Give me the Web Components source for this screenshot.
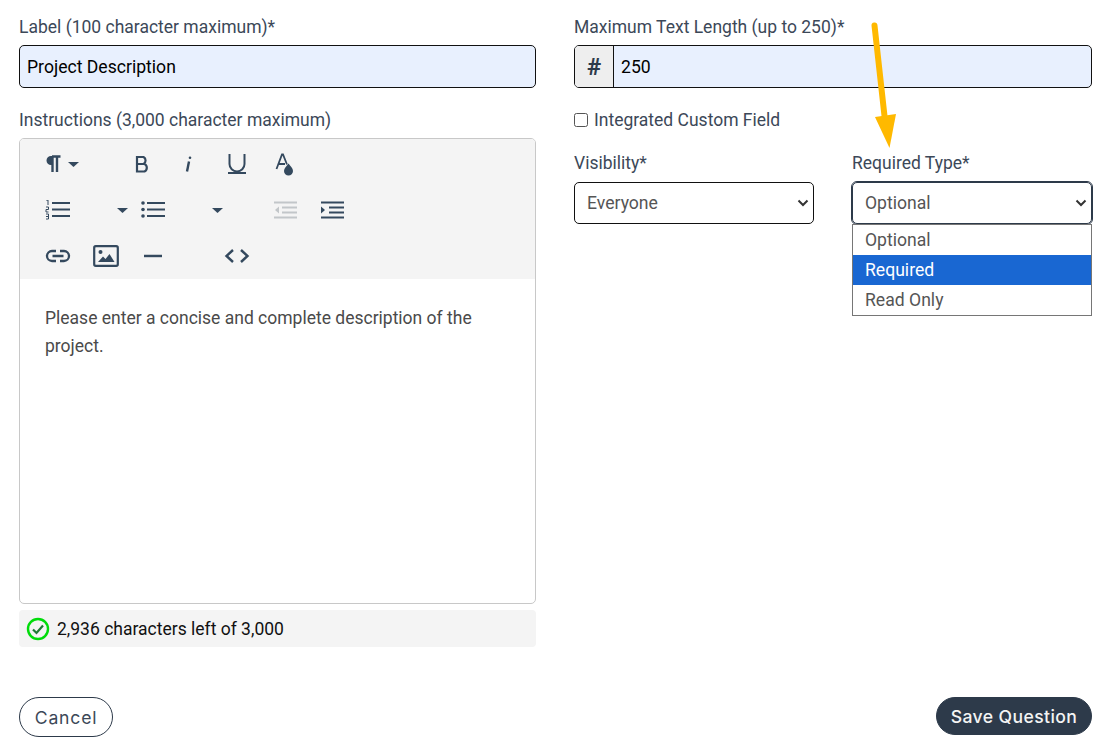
<!DOCTYPE html>
<html>
<head>
<meta charset="utf-8">
<style>
  html, body { margin: 0; background: #fff; }
  body { font-family: Roboto, sans-serif; color: #2d3a4a; }
</style>
</head>
<body>
<question-form>
  <div slot="left">
    <form-field label="Label (100 character maximum)*"><text-box value="Project Description"></text-box></form-field>
    <form-field label="Instructions (3,000 character maximum)">
      <rich-editor>Please enter a concise and complete description of the project.</rich-editor>
      <char-counter>2,936 characters left of 3,000</char-counter>
    </form-field>
  </div>
  <div slot="right">
    <form-field label="Maximum Text Length (up to 250)*"><text-box value="250" prefix="#"></text-box></form-field>
    <check-row>Integrated Custom Field</check-row>
    <select-row>
      <form-field label="Visibility*"><select-box value="Everyone"></select-box></form-field>
      <form-field label="Required Type*"><select-box value="Optional" open options="Optional,Required,Read Only" selected="1"></select-box></form-field>
    </select-row>
  </div>
  <pill-button slot="cancel">Cancel</pill-button>
  <pill-button slot="save" primary>Save Question</pill-button>
</question-form>
<script>
class QuestionForm extends HTMLElement {
  connectedCallback() {
    this.attachShadow({ mode: 'open' }).innerHTML = `
      <style>
        :host { display: block; position: relative; width: 1104px; height: 747px; box-sizing: border-box; padding: 17px 12px 10px 19px; overflow: hidden; }
        .cols { display: grid; grid-template-columns: 517px 518px; column-gap: 38px; height: 630px; }
        .foot { display: flex; justify-content: space-between; align-items: flex-start; margin-top: 50px; }
        svg { position: absolute; left: 860px; top: 15px; pointer-events: none; }
      </style>
      <div class="cols"><slot name="left"></slot><slot name="right"></slot></div>
      <div class="foot"><slot name="cancel"></slot><slot name="save"></slot></div>
      <svg width="45" height="140" viewBox="0 0 45 140">
        <path d="M14.500 10.500 L24.500 101" stroke="#ffb900" stroke-width="6" stroke-linecap="round" fill="none"/>
        <path d="M15 102 L36 99 L29.500 133 Z" fill="#ffb900"/>
      </svg>`;
  }
}
class FormField extends HTMLElement {
  connectedCallback() {
    this.attachShadow({ mode: 'open' }).innerHTML = `
      <style>
        :host { display: block; margin-bottom: 22px; }
        label { display: block; font-size: 17.5px; line-height: 21px; margin-bottom: var(--label-gap, 7px); color: #3c4858; }
      </style>
      <label>${this.getAttribute('label')}</label><slot></slot>`;
  }
}
class TextBox extends HTMLElement {
  connectedCallback() {
    const prefix = this.getAttribute('prefix');
    this.attachShadow({ mode: 'open' }).innerHTML = `
      <style>
        :host { display: flex; height: 43px; box-sizing: border-box; border: 1px solid #111; border-radius: 5px; overflow: hidden; background: #e8f0fe; }
        .pre { width: 38px; flex: none; display: flex; align-items: center; justify-content: center; background: #eee; border-right: 1px solid #111; font-size: 24px; font-weight: 700; color: #2d3a4a; }
        .val { flex: 1; display: flex; align-items: center; padding-left: 7px; font-size: 17.6px; color: #000; }
      </style>
      ${prefix ? `<div class="pre">${prefix}</div>` : ''}<div class="val">${this.getAttribute('value')}</div>`;
  }
}
class RichEditor extends HTMLElement {
  connectedCallback() {
    const c = '#34495e';
    const caret = `<svg class="caret" width="11" height="5" viewBox="0 0 11 5"><path d="M0 0H11L5.500 5Z" fill="${c}"/></svg>`;
    this.attachShadow({ mode: 'open' }).innerHTML = `
      <style>
        :host { display: block; height: 466px; box-sizing: border-box; border: 1px solid #c8c8c8; border-radius: 5px; overflow: hidden; font-size: 17.5px; color: #4a4a4a; }
        .bar { height: 140px; background: #f4f4f4; display: flex; flex-direction: column; }
        .row { height: 46px; display: flex; align-items: center; padding-left: 25px; }
        .row:first-child { margin-top: 2px; }
        .tool { flex: none; display: flex; align-items: center; }
        .body { padding: 25px; line-height: 28px; }
      </style>
      <div class="bar">
        <div class="row">
          <span class="tool" style="width:89px;gap:6px">
            <svg width="17" height="20" viewBox="0 0 17 20"><path d="M7 2.500H15.500M7.500 2.500V18M12 2.500V18" stroke="${c}" stroke-width="2.400" fill="none"/><path d="M8 2H6A4.500 4.500 0 0 0 6 11H8Z" fill="${c}"/></svg>${caret}
          </span>
          <span class="tool" style="width:49px"><svg width="18" height="20" viewBox="0 0 18 20"><path d="M3 3H9.500A4 4 0 0 1 9.500 10H3ZM9.500 10H10.500A4.200 4.200 0 0 1 10.500 17.500H3V3" stroke="${c}" stroke-width="2.200" fill="none"/></svg></span>
          <span class="tool" style="width:44px"><svg width="12" height="20" viewBox="0 0 12 20"><path d="M6 7.500 L4 17.500" stroke="${c}" stroke-width="2.400" fill="none"/><circle cx="7" cy="3.800" r="1.300" fill="${c}"/></svg></span>
          <span class="tool" style="width:48px"><svg width="20" height="24" viewBox="0 0 20 24"><path d="M2.500 2V12A7.500 7.500 0 0 0 17.500 12V2" stroke="${c}" stroke-width="2" fill="none"/><path d="M1 21H19" stroke="${c}" stroke-width="2"/></svg></span>
          <span class="tool"><svg width="20" height="24" viewBox="0 0 20 24"><path d="M1.500 17L7 2.500H8L12 12.500M3.500 12H10" stroke="${c}" stroke-width="1.800" fill="none"/><path d="M13.500 11.500C15.500 14.500 18 16 18 19A4.500 4.500 0 0 1 9 19C9 16 11.500 14.500 13.500 11.500Z" fill="${c}"/></svg></span>
        </div>
        <div class="row">
          <span class="tool" style="width:72px"><svg width="26" height="20" viewBox="0 0 26 20"><path d="M7 3H25M7 9.500H25M7 16H25" stroke="${c}" stroke-width="2.200"/><path d="M1.500 .5L3 0V5M1 7H3.500V9.500H1V12H3.500M1 14H3.500V19H1M1 16.500H3.500" stroke="${c}" stroke-width="1" fill="none"/></svg></span>
          <span class="tool" style="width:24px">${caret}</span>
          <span class="tool" style="width:71px"><svg width="25" height="20" viewBox="0 0 25 20"><path d="M6 3H24M6 9.500H24M6 16H24" stroke="${c}" stroke-width="2.200"/><circle cx="2" cy="3" r="1.800" fill="${c}"/><circle cx="2" cy="9.500" r="1.800" fill="${c}"/><circle cx="2" cy="16" r="1.800" fill="${c}"/></svg></span>
          <span class="tool" style="width:62px">${caret}</span>
          <span class="tool" style="width:47px"><svg width="23" height="20" viewBox="0 0 23 20"><path d="M0 2.500H23M8 7.500H23M8 12.500H23M0 17.500H23" stroke="#c2c6c9" stroke-width="2.200"/><path d="M5 6.500V13.500L1 10Z" fill="#c2c6c9"/></svg></span>
          <span class="tool"><svg width="23" height="20" viewBox="0 0 23 20"><path d="M0 2.500H23M8 7.500H23M8 12.500H23M0 17.500H23" stroke="${c}" stroke-width="2.200"/><path d="M0 6.500V13.500L4 10Z" fill="${c}"/></svg></span>
        </div>
        <div class="row">
          <span class="tool" style="width:48px"><svg width="26" height="14" viewBox="0 0 26 14"><path d="M11 2H7A5 5 0 0 0 7 12H11M15 2H19A5 5 0 0 1 19 12H15M7.500 7H18.500" stroke="${c}" stroke-width="2.300" fill="none"/></svg></span>
          <span class="tool" style="width:51px"><svg width="26" height="22" viewBox="0 0 26 22"><rect x="1.200" y="1.200" width="23.600" height="19.600" rx="1.500" stroke="${c}" stroke-width="2.200" fill="none"/><circle cx="7.500" cy="7" r="2" fill="${c}"/><path d="M5 17L10 11.500L12.500 14L16.500 9L21.500 17Z" fill="${c}"/></svg></span>
          <span class="tool" style="width:80px"><svg width="18" height="4" viewBox="0 0 18 4"><path d="M0 2H18" stroke="${c}" stroke-width="2.400"/></svg></span>
          <span class="tool"><svg width="26" height="16" viewBox="0 0 26 16"><path d="M9 2L2.500 8L9 14M17 2L23.500 8L17 14" stroke="${c}" stroke-width="2.400" fill="none"/></svg></span>
        </div>
      </div>
      <div class="body"><slot></slot></div>`;
  }
}
class CharCounter extends HTMLElement {
  connectedCallback() {
    this.attachShadow({ mode: 'open' }).innerHTML = `
      <style>
        :host { display: flex; align-items: center; gap: 7px; height: 37px; margin-top: 6px; padding-left: 7px; background: #f4f4f4; border-radius: 4px; font-size: 17.5px; color: #111; }
      </style>
      <svg width="24" height="24" viewBox="0 0 24 24"><circle cx="12" cy="12" r="10" stroke="#00dc0a" stroke-width="2.400" fill="none"/><path d="M7 12.500L10.500 16L17 8.500" stroke="#1f7a35" stroke-width="2.200" fill="none"/></svg>
      <slot></slot>`;
  }
}
class CheckRow extends HTMLElement {
  connectedCallback() {
    this.attachShadow({ mode: 'open' }).innerHTML = `
      <style>
        :host { display: flex; align-items: center; gap: 6px; height: 21px; margin: -1px 0 23px; font-size: 17.5px; color: #3c4858; }
        i { width: 14px; height: 14px; box-sizing: border-box; border: 1px solid #555; border-radius: 2.500px; background: #fff; }
      </style>
      <i></i><slot></slot>`;
  }
}
class SelectRow extends HTMLElement {
  connectedCallback() {
    this.attachShadow({ mode: 'open' }).innerHTML = `
      <style>:host { display: grid; grid-template-columns: 240px 240px; column-gap: 38px; --label-gap: 8px; }</style><slot></slot>`;
  }
}
class SelectBox extends HTMLElement {
  connectedCallback() {
    const open = this.hasAttribute('open');
    const selected = Number(this.getAttribute('selected'));
    const options = (this.getAttribute('options') || '').split(',').filter(Boolean);
    this.attachShadow({ mode: 'open' }).innerHTML = `
      <style>
        :host { display: block; position: relative; font-size: 17.6px; }
        .box { height: 42px; box-sizing: border-box; display: flex; align-items: center; justify-content: space-between; padding: 0 4px 0 12px; border: 1px solid #111; border-radius: 5px; color: #555; background: #fff; }
        .box.open { border-color: #2d3a4a; outline: 1px solid #2d3a4a; }
        .list { position: absolute; left: 0; right: 0; top: 42px; box-sizing: border-box; background: #fff; border: 1px solid #767676; }
        .opt { height: 30px; display: flex; align-items: center; padding-left: 12px; color: #555; }
        .opt.on { background: #1967d2; color: #fff; }
      </style>
      <div class="box ${open ? 'open' : ''}">${this.getAttribute('value')}
        <svg width="12" height="8" viewBox="0 0 12 8"><path d="M1.500 1.500L6 6L10.500 1.500" stroke="#333" stroke-width="2" fill="none"/></svg>
      </div>
      ${open ? `<div class="list">${options.map((o, i) => `<div class="opt ${i === selected ? 'on' : ''}">${o}</div>`).join('')}</div>` : ''}`;
  }
}
class PillButton extends HTMLElement {
  connectedCallback() {
    this.attachShadow({ mode: 'open' }).innerHTML = `
      <style>
        :host { display: inline-flex; align-items: center; justify-content: center; box-sizing: border-box; border-radius: 20px; font-family: Inter, sans-serif; font-size: 17.6px; letter-spacing: .8px; border: 1px solid #2d3a4a; color: #3c4858; background: #fff; height: 40px; width: 94px; }
        :host([primary]) { background: #2d3a4a; color: #f4f4f4; width: 156px; height: 38px; font-weight: 500; letter-spacing: .4px; }
      </style>
      <slot></slot>`;
  }
}
customElements.define('question-form', QuestionForm);
customElements.define('form-field', FormField);
customElements.define('text-box', TextBox);
customElements.define('rich-editor', RichEditor);
customElements.define('char-counter', CharCounter);
customElements.define('check-row', CheckRow);
customElements.define('select-row', SelectRow);
customElements.define('select-box', SelectBox);
customElements.define('pill-button', PillButton);
</script>
</body>
</html>
